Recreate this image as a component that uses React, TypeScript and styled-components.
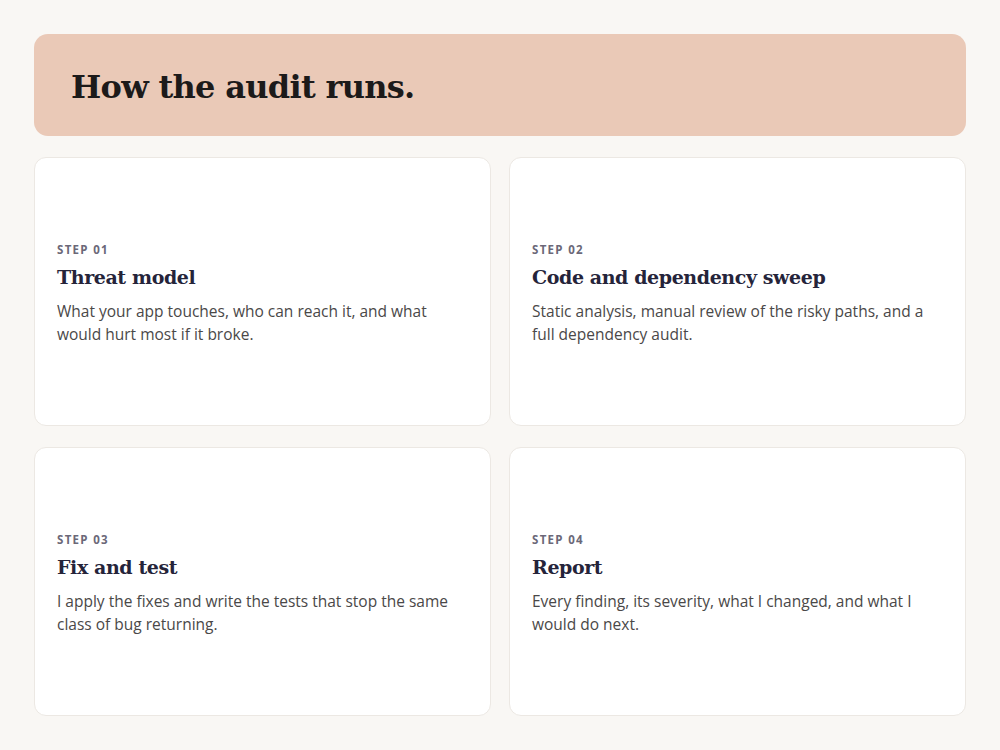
import React from "react";
import styled, { createGlobalStyle } from "styled-components";

const Global = createGlobalStyle`
  html, body { margin: 0; background: #f9f7f4; }
  * { box-sizing: border-box; }
`;

const Page = styled.div`
  padding: 34px 34px 34px;
  display: flex;
  flex-direction: column;
  gap: 21px;
`;

const Hero = styled.header`
  background: #eac9b7;
  border-radius: 14px;
  height: 102px;
  display: flex;
  align-items: center;
  padding: 4px 37px 0;
`;

const Title = styled.h1`
  margin: 0;
  font-family: "DejaVu Serif", "Liberation Serif", serif;
  font-weight: 700;
  font-size: 32px;
  letter-spacing: -0.7px;
  color: #1c1a1a;
`;

const Grid = styled.div`
  display: grid;
  grid-template-columns: 1fr 1fr;
  column-gap: 18px;
  row-gap: 21px;
`;

const Card = styled.article`
  background: #fff;
  border: 1px solid #ece8e3;
  border-radius: 12px;
  height: 269px;
  padding: 4px 22px 0;
  display: flex;
  flex-direction: column;
  justify-content: center;
`;

const Step = styled.div`
  font-family: "Open Sans", "Noto Sans", sans-serif;
  font-weight: 700;
  font-size: 11.5px;
  letter-spacing: 1.3px;
  color: #6b6878;
  margin-bottom: 9px;
`;

const CardTitle = styled.h2`
  margin: 0 0 12px;
  font-family: "DejaVu Serif", "Liberation Serif", serif;
  font-weight: 700;
  font-size: 19px;
  letter-spacing: -0.4px;
  color: #25243a;
`;

const Body = styled.p`
  margin: 0;
  font-family: "Open Sans", "Noto Sans", sans-serif;
  font-size: 15.5px;
  line-height: 23px;
  color: #4a4848;
  max-width: 400px;
`;

const steps = [
  ["STEP 01", "Threat model", "What your app touches, who can reach it, and what would hurt most if it broke."],
  ["STEP 02", "Code and dependency sweep", "Static analysis, manual review of the risky paths, and a full dependency audit."],
  ["STEP 03", "Fix and test", "I apply the fixes and write the tests that stop the same class of bug returning."],
  ["STEP 04", "Report", "Every finding, its severity, what I changed, and what I would do next."],
];

export default function App() {
  return (
    <>
      <Global />
      <Page>
        <Hero>
          <Title>How the audit runs.</Title>
        </Hero>
        <Grid>
          {steps.map(([s, t, b]) => (
            <Card key={s}>
              <Step>{s}</Step>
              <CardTitle>{t}</CardTitle>
              <Body>{b}</Body>
            </Card>
          ))}
        </Grid>
      </Page>
    </>
  );
}
